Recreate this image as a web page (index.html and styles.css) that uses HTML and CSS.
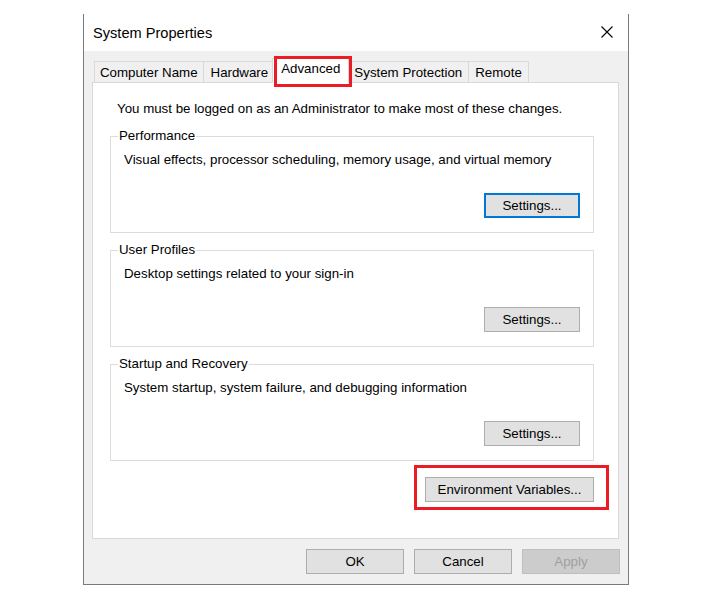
FILE: index.html
```html
<!DOCTYPE html>
<html lang="en">
<head>
  <meta charset="UTF-8">
  <title>System Properties</title>
  <link rel="stylesheet" href="styles.css">
</head>
<body>

<div class="window">
  <div class="titlebar">
    <span class="title">System Properties</span>
    <svg class="close" width="12" height="12" viewBox="0 0 12 12">
      <path d="M0.5 0.5 L11.5 11.5 M11.5 0.5 L0.5 11.5" stroke="#000" stroke-width="1.1" fill="none"/>
    </svg>
  </div>

  <div class="dialog">
    <div class="tabs">
      <div class="tab">Computer Name</div>
      <div class="tab">Hardware</div>
      <div class="tab active marked">Advanced</div>
      <div class="tab">System Protection</div>
      <div class="tab">Remote</div>
    </div>

    <div class="panel">
      <p class="intro">You must be logged on as an Administrator to make most of these changes.</p>

      <fieldset class="group">
        <legend>Performance</legend>
        <p class="desc">Visual effects, processor scheduling, memory usage, and virtual memory</p>
        <div class="group-actions"><button class="btn focused">Settings...</button></div>
      </fieldset>

      <fieldset class="group">
        <legend>User Profiles</legend>
        <p class="desc">Desktop settings related to your sign-in</p>
        <div class="group-actions"><button class="btn">Settings...</button></div>
      </fieldset>

      <fieldset class="group">
        <legend>Startup and Recovery</legend>
        <p class="desc">System startup, system failure, and debugging information</p>
        <div class="group-actions"><button class="btn">Settings...</button></div>
      </fieldset>

      <div class="env-row">
        <button class="btn env marked">Environment Variables...</button>
      </div>
    </div>

    <div class="footer">
      <button class="btn">OK</button>
      <button class="btn">Cancel</button>
      <button class="btn" disabled>Apply</button>
    </div>
  </div>
</div>

</body>
</html>
```

FILE: styles.css
```css
body {
  margin: 0;
  background-color: #fff;
  font-family: "Liberation Sans", Arial, sans-serif;
  font-size: 13.3px;
  color: #000;
}
.window {
  margin: 14px 0 0 83px;
  width: 544px;
  border: 1px solid #7a7a7a;
  border-top: none;
  background-color: #f0f0f0;
}
.titlebar {
  height: 37px;
  background-color: #fff;
  display: flex;
  align-items: center;
  justify-content: space-between;
  padding: 0 15px 0 9px;
  box-sizing: border-box;
}
.title {
  font-size: 14.6px;
}
.close {
  margin-top: -1px;
}
.dialog {
  padding: 10px 8px 10px 8px;
}
.tabs {
  display: flex;
  margin-left: 2px;
  height: 21px;
}
.tab {
  height: 21px;
  box-sizing: border-box;
  border: 1px solid #d9d9d9;
  border-bottom: none;
  border-right: none;
  padding: 2px 6px 0 7px;
  line-height: 17px;
  white-space: nowrap;
}
.tab:first-child {
  padding: 2px 5px 0 5px;
}
.tab:last-child {
  padding: 2px 6px 0 6px;
  border-right: 1px solid #d9d9d9;
}
.tab.active {
  position: relative;
  z-index: 2;
  height: 25px;
  margin: -3px -2px 0 -2px;
  padding: 1px 8px 0 8px;
  background-color: #fff;
  border-right: 1px solid #d9d9d9;
}
.tab.active + .tab {
  border-left: none;
}
.marked {
  position: relative;
}
.marked::after {
  content: "";
  position: absolute;
  border: 3px solid #ed1c24;
  pointer-events: none;
}
.tab.marked::after {
  top: -3px;
  left: 1px;
  right: -4px;
  bottom: -4px;
}
.panel {
  position: relative;
  z-index: 1;
  background-color: #fff;
  border: 1px solid #d9d9d9;
  height: 455px;
  padding: 0 24px 0 17px;
  width: 484px;
}
.intro {
  margin: 18px 0 11px 7px;
  line-height: 16px;
}
.group {
  margin: 0 0 9px 0;
  padding: 0 13px 14px 13px;
  border: 1px solid #dcdcdc;
  min-inline-size: 0;
}
.group legend {
  padding: 0 1px;
  margin-left: -6px;
  line-height: 16px;
}
.desc {
  margin: 8px 0 0 0;
  line-height: 16px;
}
.group-actions {
  display: flex;
  justify-content: flex-end;
  margin-top: 25px;
}
.btn {
  font-family: inherit;
  font-size: 13.3px;
  color: #000;
  background-color: #e1e1e1;
  border: 1px solid #adadad;
  width: 96px;
  height: 25px;
  padding: 0;
  margin: 0;
}
.btn.focused {
  border: 2px solid #0078d7;
}
.btn:disabled {
  background-color: #cccccc;
  border-color: #bfbfbf;
  color: #a0a0a0;
}
.env-row {
  display: flex;
  justify-content: flex-end;
  margin-top: 16px;
}
.btn.env {
  width: 169px;
}
.btn.env::after {
  top: -13px;
  left: -12px;
  right: -16px;
  bottom: -9px;
}
.footer {
  display: flex;
  justify-content: flex-end;
  gap: 10px;
  margin-top: 10px;
}
.footer .btn {
  width: 98px;
}
```
